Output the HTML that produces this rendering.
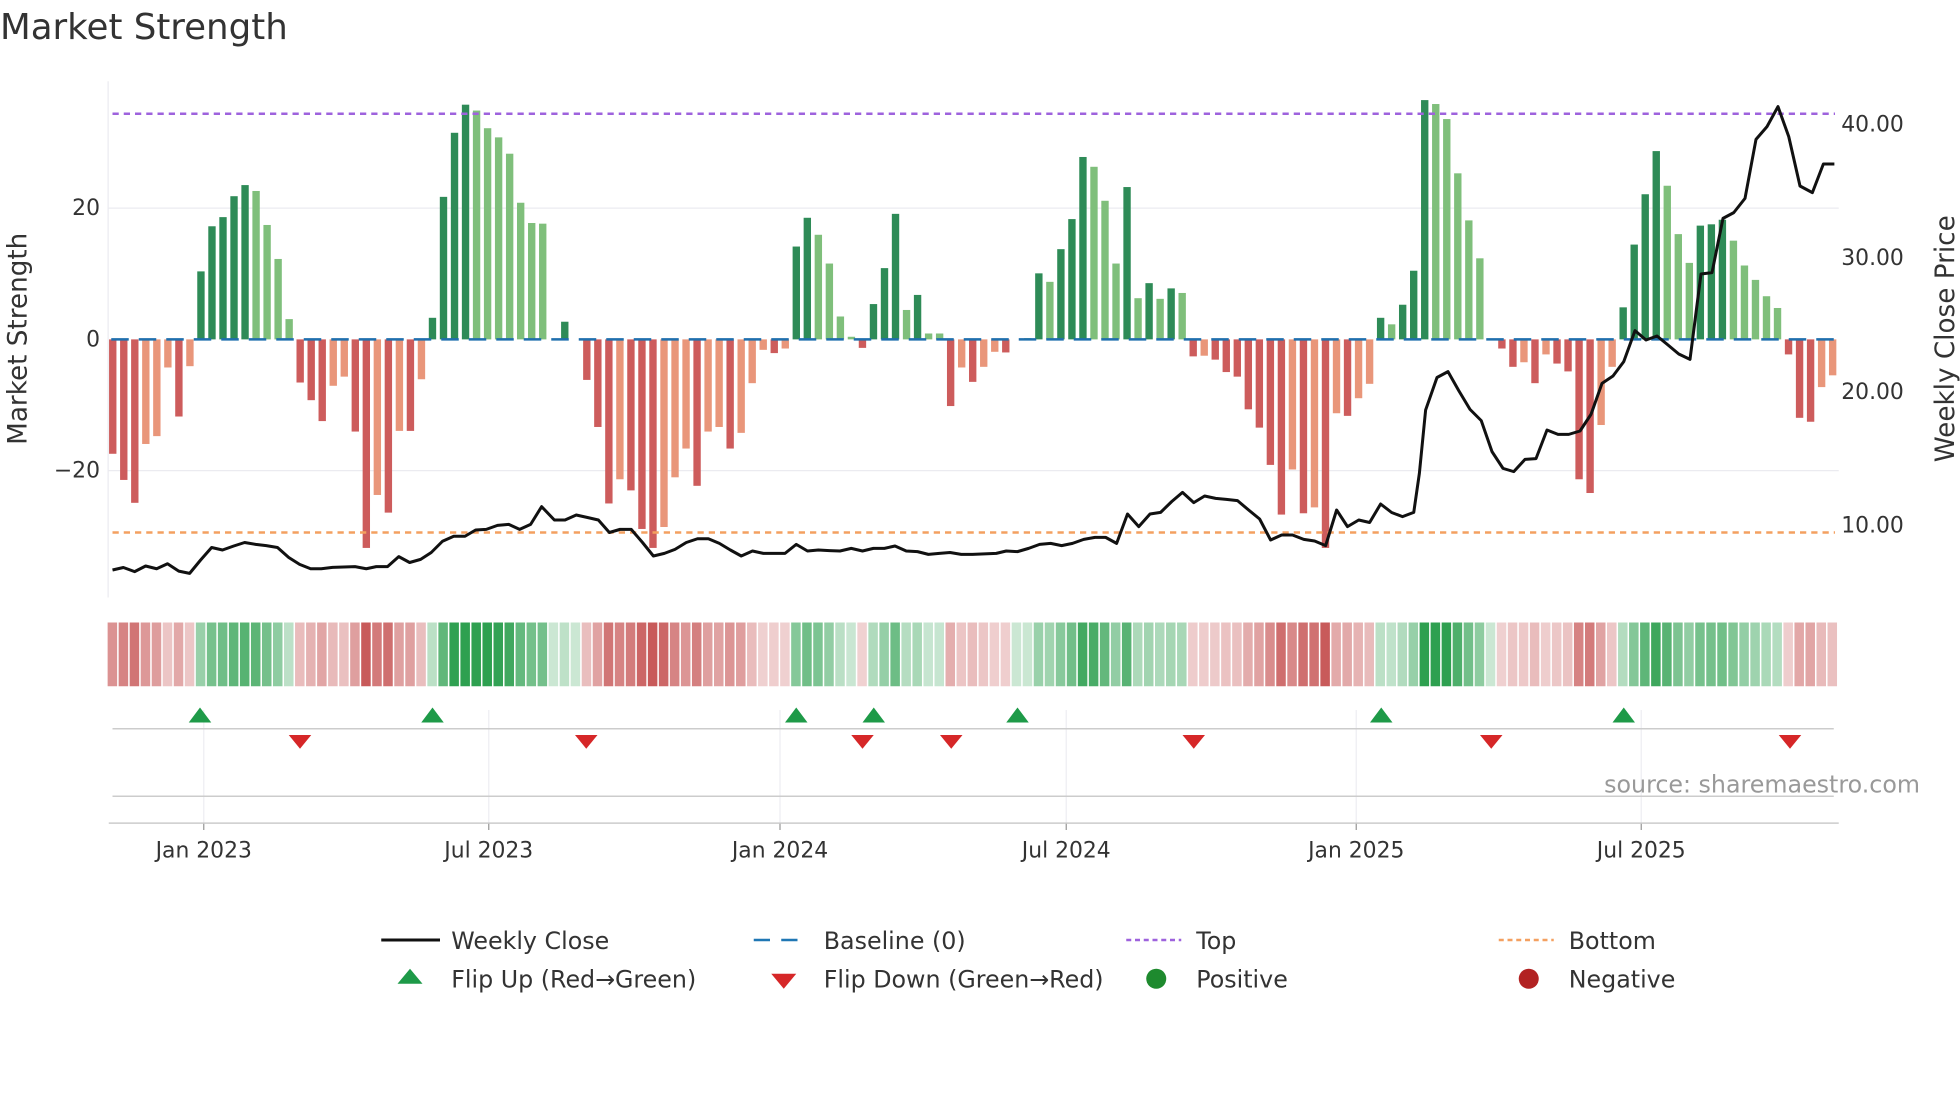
<!DOCTYPE html>
<html><head><meta charset="utf-8"><style>
html,body{margin:0;padding:0;background:#fff;}
svg{display:block;font-family:"DejaVu Sans","Liberation Sans",sans-serif;}
</style></head><body>
<svg id="s" width="1960" height="1102" viewBox="0 0 1568 881.6" xmlns="http://www.w3.org/2000/svg">
<rect width="1568" height="881.6" fill="#fff"/>
<text x="0" y="31" font-size="28.5" fill="#333">Market Strength</text>
<g stroke="#ebebf0" stroke-width="1">
<line x1="86" y1="166.5" x2="1471" y2="166.5"/>
<line x1="86" y1="376.5" x2="1471" y2="376.5"/>
<line x1="86.5" y1="65" x2="86.5" y2="478"/>
</g>
<g id="bars"></g>
<g id="base"></g>
<line x1="90" y1="91" x2="1468" y2="91" stroke="#9e62dd" stroke-width="2" stroke-dasharray="5,4"/>
<line x1="90" y1="426" x2="1468" y2="426" stroke="#f4a060" stroke-width="2" stroke-dasharray="5,4"/>
<polyline id="price" fill="none" stroke="#111" stroke-width="2.4" stroke-linejoin="round"/>
<g font-size="17.5" fill="#333" text-anchor="end">
<text x="80" y="172">20</text>
<text x="80" y="277">0</text>
<text x="80" y="382">−20</text>
</g>
<g font-size="17.5" fill="#333">
<text x="1473" y="105">40.00</text>
<text x="1473" y="212">30.00</text>
<text x="1473" y="319">20.00</text>
<text x="1473" y="426">10.00</text>
</g>
<text transform="translate(21,271) rotate(-90)" font-size="21" fill="#333" text-anchor="middle">Market Strength</text>
<text transform="translate(1563,271) rotate(-90)" font-size="21" fill="#333" text-anchor="middle">Weekly Close Price</text>
<g id="strip"></g>
<g stroke="#eeeef2" stroke-width="1">
<line x1="163" y1="568" x2="163" y2="658"/><line x1="391" y1="568" x2="391" y2="658"/>
<line x1="624" y1="568" x2="624" y2="658"/><line x1="853" y1="568" x2="853" y2="658"/>
<line x1="1085" y1="568" x2="1085" y2="658"/><line x1="1313" y1="568" x2="1313" y2="658"/>
</g>
<line x1="90" y1="583" x2="1467" y2="583" stroke="#ccc" stroke-width="1.2"/>
<line x1="90" y1="637" x2="1467" y2="637" stroke="#ccc" stroke-width="1.2"/>
<line x1="87" y1="658.5" x2="1471" y2="658.5" stroke="#ccc" stroke-width="1.2"/>
<g stroke="#999" stroke-width="1">
<line x1="163" y1="659" x2="163" y2="664"/><line x1="391" y1="659" x2="391" y2="664"/>
<line x1="624" y1="659" x2="624" y2="664"/><line x1="853" y1="659" x2="853" y2="664"/>
<line x1="1085" y1="659" x2="1085" y2="664"/><line x1="1313" y1="659" x2="1313" y2="664"/>
</g>
<g id="flips"></g>
<text x="1536" y="634" font-size="19" fill="#999" text-anchor="end">source: sharemaestro.com</text>
<g font-size="17.5" fill="#333" text-anchor="middle">
<text x="163" y="686">Jan 2023</text><text x="391" y="686">Jul 2023</text>
<text x="624" y="686">Jan 2024</text><text x="853" y="686">Jul 2024</text>
<text x="1085" y="686">Jan 2025</text><text x="1313" y="686">Jul 2025</text>
</g>
<g font-size="19" fill="#333">
<line x1="305" y1="752" x2="352" y2="752" stroke="#111" stroke-width="2.4"/>
<text x="361" y="759">Weekly Close</text>
<line x1="603" y1="752" x2="647" y2="752" stroke="#1f77b4" stroke-width="2" stroke-dasharray="13,9"/>
<text x="659" y="759">Baseline (0)</text>
<line x1="901" y1="752" x2="945" y2="752" stroke="#9e62dd" stroke-width="2" stroke-dasharray="4,3"/>
<text x="957" y="759">Top</text>
<line x1="1199" y1="752" x2="1243" y2="752" stroke="#f4a060" stroke-width="2" stroke-dasharray="4,3"/>
<text x="1255" y="759">Bottom</text>
<polygon points="328,775 338,787 318,787" fill="#1e9a48"/>
<text x="361" y="790">Flip Up (Red→Green)</text>
<polygon points="617,779 637,779 627,791" fill="#d62728"/>
<text x="659" y="790">Flip Down (Green→Red)</text>
<circle cx="925" cy="783" r="8" fill="#1e8a2e"/>
<text x="957" y="790">Positive</text>
<circle cx="1223" cy="783" r="8" fill="#b22222"/>
<text x="1255" y="790">Negative</text>
</g>
</svg>
<script>
var NS="http://www.w3.org/2000/svg";
function el(t,a,p){var e=document.createElementNS(NS,t);for(var k in a)e.setAttribute(k,a[k]);p.appendChild(e);return e;}
var d=[[-17.5,1],[-21.5,1],[-25,1],[-16,0],[-14.8,0],[-4.3,0],[-11.8,1],[-4.1,0],[10.4,1],[17.3,1],[18.7,1],[21.9,1],[23.6,1],[22.7,0],[17.5,0],[12.3,0],[3.1,0],[-6.6,1],[-9.3,1],[-12.5,1],[-7.1,0],[-5.7,0],[-14.1,1],[-31.9,1],[-23.8,0],[-26.5,1],[-14,0],[-14,1],[-6.1,0],[3.3,1],[21.8,1],[31.6,1],[35.9,1],[35,0],[32.3,0],[30.9,0],[28.4,0],[20.9,0],[17.8,0],[17.7,0],
[0,0],[2.7,1],[0,0],[-6.2,1],[-13.4,1],[-25.1,1],[-21.4,0],[-23.1,1],[-29,1],[-31.9,1],[-28.7,0],[-21.1,0],[-16.7,0],[-22.4,1],[-14.1,0],[-13.4,0],[-16.7,1],[-14.3,0],[-6.7,0],[-1.6,0],[-2.1,1],[-1.4,0],[14.2,1],[18.6,1],[16,0],[11.6,0],[3.5,0],[0.4,0],[-1.3,1],[5.4,1],[10.9,1],[19.2,1],[4.5,0],[6.8,1],[0.9,0],[0.9,0],[-10.2,1],[-4.3,0],[-6.5,1],[-4.2,0],
[-1.9,0],[-2,1],[0,0],[0.2,0],[10.1,1],[8.8,0],[13.8,1],[18.4,1],[27.9,1],[26.4,0],[21.2,0],[11.6,0],[23.3,1],[6.3,0],[8.6,1],[6.2,0],[7.8,1],[7.1,0],[-2.6,1],[-2.5,0],[-3.1,1],[-5,1],[-5.7,1],[-10.7,1],[-13.5,1],[-19.2,1],[-26.8,1],[-19.9,0],[-26.6,1],[-25.7,0],[-31.9,1],[-11.3,0],[-11.7,1],[-9,0],[-6.8,0],[3.3,1],[2.3,0],[5.3,1],[10.5,1],[36.6,1],
[36,0],[33.7,0],[25.4,0],[18.2,0],[12.4,0],[0,0],[-1.4,1],[-4.2,1],[-3.5,0],[-6.7,1],[-2.3,0],[-3.7,1],[-4.9,1],[-21.4,1],[-23.5,1],[-13.1,0],[-4.2,0],[4.9,1],[14.5,1],[22.2,1],[28.8,1],[23.5,0],[16.1,0],[11.7,0],[17.4,1],[17.6,1],[18.3,1],[15.1,0],[11.3,0],[9.1,0],[6.6,0],[4.8,0],[-2.3,1],[-12,1],[-12.6,1],[-7.3,0],[-5.5,0]];
var bars=document.getElementById("bars"),strip=document.getElementById("strip");
var Z=271.5,K=5.23;
function mix(c,t){return "rgb("+c.map(function(v){return Math.round(255+(v-255)*t)}).join(",")+")";}
for(var i=0;i<d.length;i++){
 var v=d[i][0],x=90.2+8.82*i;
 if(Math.abs(v)>0.05){
  var col=v>0?(d[i][1]?"#2e8b57":"#7fbf7b"):(d[i][1]?"#cd5c5c":"#e9967a");
  var h=Math.abs(v)*K;
  el("rect",{x:x-2.95,y:v>0?Z-h:Z,width:5.9,height:h,fill:col},bars);
 }
 var t=0.25+0.75*Math.min(1,Math.abs(v)/32);
 var sc=v>=0?mix([46,160,80],t):mix([200,90,90],t);
 el("rect",{x:x-4.1,y:498,width:7.6,height:51,fill:sc},strip);
}
el("line",{x1:89,y1:271.5,x2:1468,y2:271.5,stroke:"#1f6fad","stroke-width":2,"stroke-dasharray":"14,8"},document.getElementById("base"));
var p="90,456 98.7,454 107.7,457.3 116.5,452.8 125.3,455 134,451 143,456.9 151.7,458.7 160.5,448 169.3,438 178,440 187,436.8 195.7,434 204.5,435.5 213,436.5 222,438 231,446 239.7,451.5 248.5,455 257,455 266,453.9 284,453.3 293,455 301,453.3 310,453.3 319,445.3 327.7,450 336.5,447.5 345,442 354,433 363,429 372,429 380.5,424 389,423.5 398,420.3 407,419.5 415.7,423.5 424.5,419.5 433.3,405.3 443.5,416 452,416 461,412 470,414 478.7,416 487.5,426 496,423.5 505,423.5 514,434 522.7,444.8 531.5,442.7 540,439.5 549,434 558,431 566.7,431 575.5,434.7 584.3,440 593,444.8 602,440.8 610.7,442.7 619.5,442.7 628,442.7 637,435.5 646,440.8 654.7,440 663.5,440.5 672,440.8 681,438.7 690,440.8 698.7,438.7 707.5,438.7 716,436.8 725,440.8 734,441.3 742.7,443.5 751.5,442.7 760,442 769,443.5 778,443.5 797,442.7 805,440.8 814,441.3 822.9,438.7 831.7,435.5 840.5,434.7 849.3,436.5 858,434.7 867,431.5 876,429.9 884.5,429.9 893.3,434.7 902,411.2 911,421.3 920,411.2 928.5,409.9 937.3,401.3 946,393.9 955,402.1 963.7,396.8 972.5,398.7 981,399.5 990,400.5 998.9,408 1007.7,415.2 1016.5,432 1025.3,428 1034,428 1043,431.5 1051.7,432.8 1060.5,436.5 1069.3,408 1078,421.3 1087,416 1095.7,418 1104.5,403.2 1113.3,410 1122,413.3 1131,409.9 1135.5,378.7 1140.5,328 1149.6,302 1158.4,297.3 1167,312.5 1176,327.5 1185,336.5 1193.6,361.3 1202.4,374.7 1211,377.3 1220,367.5 1228.8,366.9 1237.6,344 1246.4,347.5 1255,347.5 1264,344.8 1272.8,331.5 1281.6,306.7 1290.4,300.8 1299,289.3 1308,264.5 1316.8,272 1325.6,268.8 1334.4,276 1343,283.2 1352,287.5 1360.8,219.2 1369.6,218.1 1378.4,174.7 1387,170.1 1396,158.7 1404.8,111.5 1413.6,101.3 1422.4,85.3 1431,109.3 1440,148.8 1449.9,154.1 1458.7,131.2 1467.5,131.2";
document.getElementById("price").setAttribute("points",p);
var f=document.getElementById("flips");
[160,346,637,699,814,1105,1299].forEach(function(x){el("polygon",{points:(x)+",566 "+(x+9)+",578 "+(x-9)+",578",fill:"#1e9a48"},f);});
[240,469,690,761,955,1193,1432].forEach(function(x){el("polygon",{points:(x-9)+",588 "+(x+9)+",588 "+x+",599",fill:"#d62728"},f);});
</script>
</body></html>
